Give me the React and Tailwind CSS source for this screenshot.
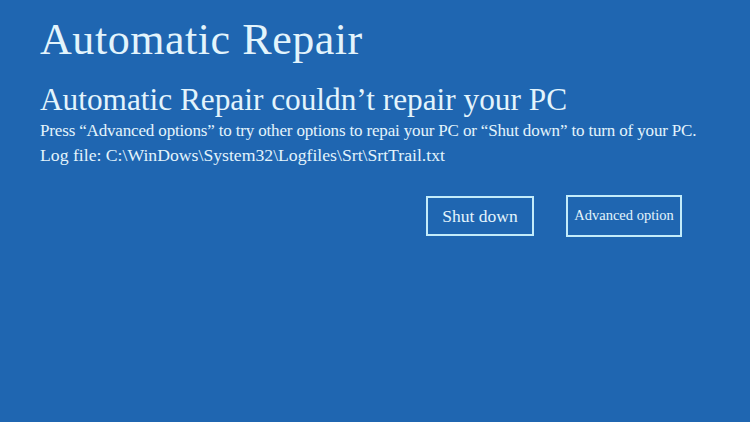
import React from 'react';

const App = () => {
  return (
    <div className="w-[750px] h-[422px] bg-[#1f66b1] text-[#e3f4fc] font-['Liberation_Serif',serif] overflow-hidden">
      <div className="pl-[40px] pt-[16px]">
        <h1 className="text-[44px] leading-[48px] tracking-[0.55px]">Automatic Repair</h1>
        <h2 className="mt-[20px] text-[31.3px] leading-[32px]">Automatic Repair couldn’t repair your PC</h2>
        <p className="mt-[4px] text-[17px] leading-[22px] tracking-[-0.16px]">
          Press “Advanced options” to try other options to repai your PC or “Shut down” to turn of your PC.
        </p>
        <p className="mt-[2px] text-[17.7px] leading-[22px]">Log file: C:\WinDows\System32\Logfiles\Srt\SrtTrail.txt</p>
      </div>
      <div className="flex items-center mt-[29px] pl-[426px] gap-[32px]">
        <button className="w-[108px] h-[40px] border-2 border-[#c3ecfa] text-[17.5px]">Shut down</button>
        <button className="w-[116px] h-[42px] border-2 border-[#c3ecfa] text-[14.5px] pb-[1px]">Advanced option</button>
      </div>
    </div>
  );
};

export default App;
